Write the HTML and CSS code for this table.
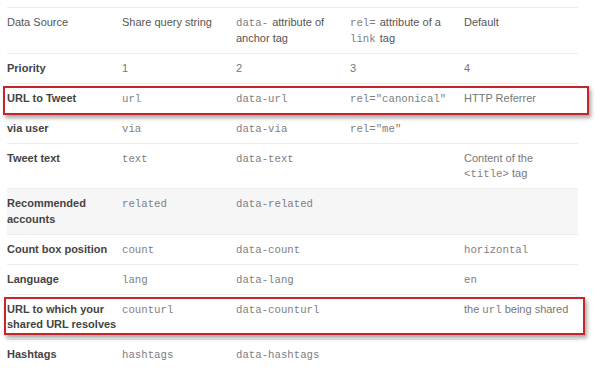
FILE: index.html
```html
<!DOCTYPE html>
<html lang="en">
<head>
  <meta charset="UTF-8" />
  <title>Tweet button parameters</title>
  <link rel="stylesheet" href="styles.css">
</head>
<body>

  <div class="page">
    <table class="params">
      <colgroup>
        <col class="col-source">
        <col><col><col><col>
      </colgroup>
      <thead>
        <tr>
          <th>Data Source</th>
          <th>Share query string</th>
          <th><code>data-</code> attribute of anchor tag</th>
          <th><code>rel=</code> attribute of a <code>link</code> tag</th>
          <th>Default</th>
        </tr>
      </thead>
      <tbody>
        <tr>
          <td>Priority</td>
          <td>1</td>
          <td>2</td>
          <td>3</td>
          <td>4</td>
        </tr>
        <tr>
          <td>URL to Tweet</td>
          <td><code>url</code></td>
          <td><code>data-url</code></td>
          <td><code>rel="canonical"</code></td>
          <td>HTTP Referrer</td>
        </tr>
        <tr>
          <td>via user</td>
          <td><code>via</code></td>
          <td><code>data-via</code></td>
          <td><code>rel="me"</code></td>
          <td></td>
        </tr>
        <tr>
          <td>Tweet text</td>
          <td><code>text</code></td>
          <td><code>data-text</code></td>
          <td></td>
          <td>Content of the <code>&lt;title&gt;</code> tag</td>
        </tr>
        <tr class="shaded">
          <td>Recommended accounts</td>
          <td><code>related</code></td>
          <td><code>data-related</code></td>
          <td></td>
          <td></td>
        </tr>
        <tr>
          <td>Count box position</td>
          <td><code>count</code></td>
          <td><code>data-count</code></td>
          <td></td>
          <td><code>horizontal</code></td>
        </tr>
        <tr>
          <td>Language</td>
          <td><code>lang</code></td>
          <td><code>data-lang</code></td>
          <td></td>
          <td><code>en</code></td>
        </tr>
        <tr>
          <td>URL to which your shared URL resolves</td>
          <td><code>counturl</code></td>
          <td><code>data-counturl</code></td>
          <td></td>
          <td>the <code>url</code> being shared</td>
        </tr>
        <tr>
          <td>Hashtags</td>
          <td><code>hashtags</code></td>
          <td><code>data-hashtags</code></td>
          <td></td>
          <td></td>
        </tr>
      </tbody>
    </table>

    <!-- red highlight boxes drawn over the table -->
    <div class="highlight highlight-tweet"></div>
    <div class="highlight highlight-count"></div>
  </div>

</body>
</html>
```

FILE: styles.css
```css
body {
  margin: 0;
  background: #fff;
  font-family: 'Liberation Sans', Arial, sans-serif;
  font-size: 11px;
  color: #777;
}

.page {
  position: relative;
  width: 600px;
  height: 370px;
  overflow: hidden;
}

.params {
  margin: 7px 0 0 7px;
  width: 571px;
  border-collapse: collapse;
  table-layout: fixed;
}

.col-source {
  width: 115px;
}

.params th,
.params td {
  height: 15.5px;
  padding: 7px 4px 6.5px 0;
  border-top: 1px solid #ececec;
  line-height: 15.5px;
  text-align: left;
  vertical-align: top;
}

.params th {
  font-weight: normal;
  color: #555;
}

.params td:first-child {
  font-weight: bold;
  color: #444;
}

.params .shaded td {
  background: #f6f6f6;
}

code {
  font-family: 'Liberation Mono', 'Courier New', monospace;
  font-size: 10.7px;
  line-height: 1;
  color: #808080;
}

th code {
  margin-right: 1px;
}

.highlight {
  position: absolute;
  border: 2px solid #c4262c;
  box-shadow: 2px 3px 4px rgba(0, 0, 0, 0.35);
}

.highlight-tweet {
  left: 3px;
  top: 86px;
  width: 582px;
  height: 25px;
}

.highlight-count {
  left: 4px;
  top: 297px;
  width: 577px;
  height: 34px;
}
```
